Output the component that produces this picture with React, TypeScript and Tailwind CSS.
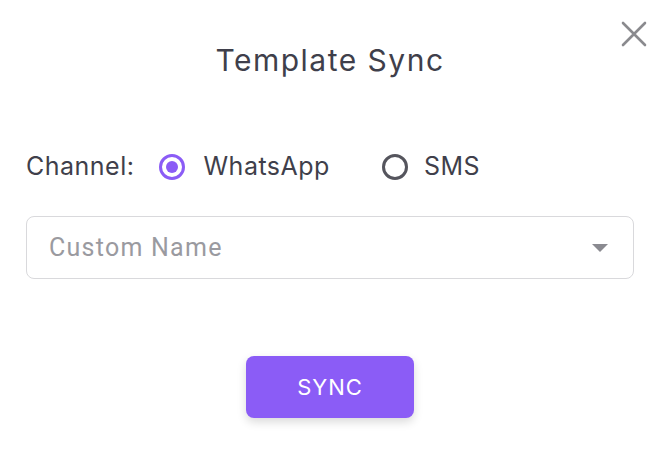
import React from "react";

export default function App() {
  return (
    <div
      className="relative w-[668px] h-[452px] bg-white pl-[26px] pr-[34px] pt-[38px]"
      style={{ fontFamily: "Inter, 'Noto Sans', sans-serif" }}
    >
      <button className="absolute right-[21px] top-[21px] text-[#8a8a8e]">
        <svg width="26" height="26" viewBox="0 0 26 26" fill="none" stroke="currentColor" strokeWidth="2.6" strokeLinecap="round">
          <path d="M2 2l22 22M24 2L2 24" />
        </svg>
      </button>

      <h1 className="text-center text-[30px] leading-[44px] tracking-[0.05em] text-[#3f3f4b]">Template Sync</h1>

      <div className="mt-[69px] flex items-center text-[25px] tracking-[0.02em] text-[#3f3f4b] h-[32px]">
        <span>Channel:</span>
        <label className="ml-[25px] flex items-center">
          <span className="w-[26px] h-[26px] rounded-full border-[3px] border-[#8b5cf6] flex items-center justify-center">
            <span className="w-[12px] h-[12px] rounded-full bg-[#8b5cf6]" />
          </span>
          <span className="ml-[18px]">WhatsApp</span>
        </label>
        <label className="ml-[52px] flex items-center">
          <span className="w-[26px] h-[26px] rounded-full border-[3px] border-[#55555d]" />
          <span className="ml-[16px]">SMS</span>
        </label>
      </div>

      <div className="mt-[33px] h-[63px] rounded-[8px] border border-[#d9d9dc] flex items-center justify-between pl-[22px] pr-[25px]">
        <span className="text-[25px] tracking-[0.05em] text-[#9a9aa0]" style={{ fontFamily: "Roboto, sans-serif" }}>Custom Name</span>
        <svg width="16" height="8" viewBox="0 0 16 8">
          <path d="M0 0h16L8 8z" fill="#8a8a90" />
        </svg>
      </div>

      <div className="mt-[77px] flex justify-center">
        <button className="w-[168px] h-[62px] rounded-[8px] bg-[#8b5cf6] text-white text-[22px] tracking-[1px] shadow-[0_4px_10px_rgba(0,0,0,0.15)]">
          SYNC
        </button>
      </div>
    </div>
  );
}
